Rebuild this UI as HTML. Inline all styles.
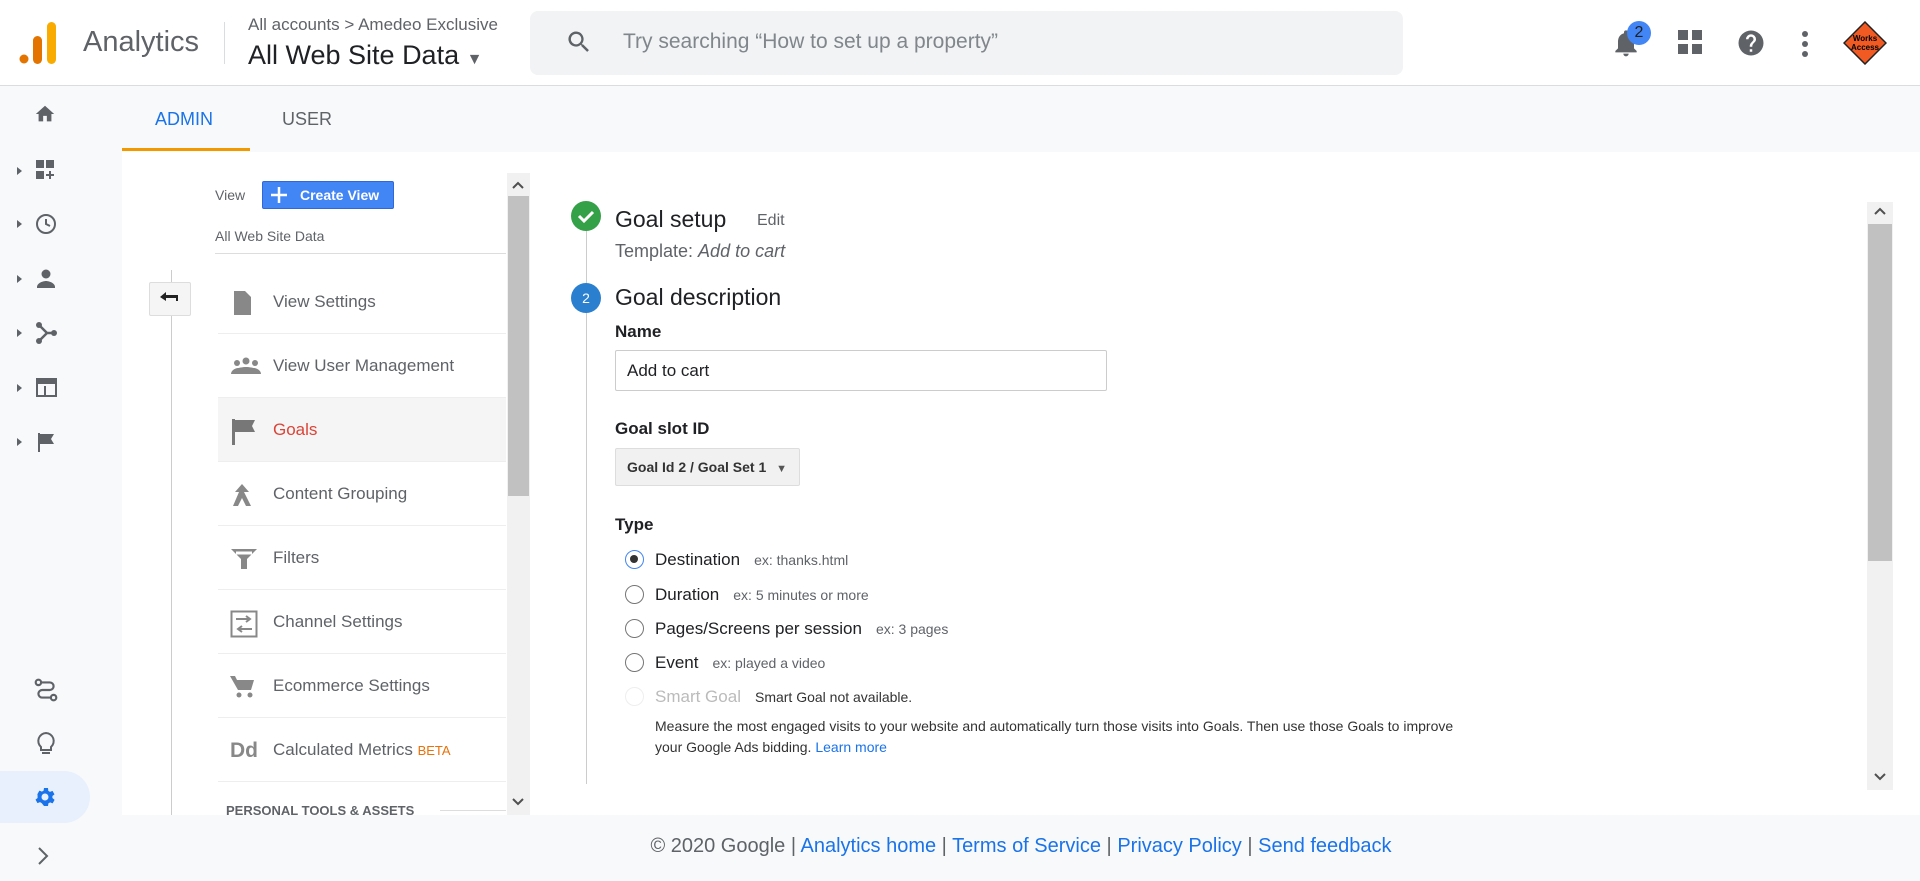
<!DOCTYPE html>
<html><head><meta charset="utf-8"><style>
*{box-sizing:border-box;margin:0;padding:0}
body{width:1920px;height:881px;overflow:hidden;background:#f8f9fa;font-family:"Liberation Sans",Arial,sans-serif;color:#202124;position:relative}
.a{position:absolute}
.hdr{left:0;top:0;width:1920px;height:86px;background:#fff;border-bottom:1px solid #dadce0}
.nav svg{position:absolute}
.ico{fill:#5f6368}
.row{position:absolute;left:218px;width:288px;height:64px;border-bottom:1px solid #eee;font-size:17px;color:#5f6368}
.row span{position:absolute;left:55px;top:22px}
.row svg{position:absolute;left:12px;top:20px}
.radio{position:absolute;left:625px;width:19px;height:19px;border:1.5px solid #757575;border-radius:50%;background:#fff}
.rl{position:absolute;left:655px;font-size:17px;color:#202124}
.rl small{font-size:14px;color:#5f6368;margin-left:14px}
</style></head><body>
<div class="a hdr">
 <svg class="a" style="left:19px;top:22px" width="38" height="42"><rect x="28" y="0" width="9" height="42" rx="4.5" fill="#f9ab00"/><rect x="14" y="14" width="9" height="28" rx="4.5" fill="#e37400"/><circle cx="5" cy="37" r="4.5" fill="#e37400"/></svg>
 <div class="a" style="left:83px;top:26px;font-size:29px;color:#5f6368">Analytics</div>
 <div class="a" style="left:224px;top:22px;width:1px;height:42px;background:#dadce0"></div>
 <div class="a" style="left:248px;top:15px;font-size:17px;color:#5f6368">All accounts &gt; Amedeo Exclusive</div>
 <div class="a" style="left:248px;top:40px;font-size:27px;color:#202124">All Web Site Data <span style="font-size:16px;color:#5f6368">▼</span></div>
 <div class="a" style="left:530px;top:11px;width:873px;height:64px;background:#f1f3f4;border-radius:8px"></div>
 <svg class="a" style="left:565px;top:28px" width="28" height="28" viewBox="0 0 24 24"><path class="ico" d="M15.5 14h-.8l-.3-.3A6.5 6.5 0 1 0 9.5 16a6.5 6.5 0 0 0 4.2-1.6l.3.3v.8l5 5 1.5-1.5-5-5zm-6 0a4.5 4.5 0 1 1 0-9 4.5 4.5 0 0 1 0 9z"/></svg>
 <div class="a" style="left:623px;top:30px;font-size:21px;color:#80868b">Try searching “How to set up a property”</div>
 <svg class="a" style="left:1610px;top:27px" width="32" height="32" viewBox="0 0 24 24"><path class="ico" d="M12 22c1.1 0 2-.9 2-2h-4c0 1.1.9 2 2 2zm6-6v-5c0-3.1-1.6-5.6-4.5-6.3V4a1.5 1.5 0 0 0-3 0v.7C7.6 5.4 6 7.9 6 11v5l-2 2v1h16v-1l-2-2z"/></svg>
 <div class="a" style="left:1627px;top:21px;width:24px;height:24px;border-radius:50%;background:#4285f4;color:#202124;font-size:16px;text-align:center;line-height:24px">2</div>
 <svg class="a" style="left:1678px;top:30px" width="26" height="26"><rect x="0" y="0" width="10" height="10" class="ico"/><rect x="14" y="0" width="10" height="10" class="ico"/><rect x="0" y="14" width="10" height="10" class="ico"/><rect x="14" y="14" width="10" height="10" class="ico"/></svg>
 <svg class="a" style="left:1736px;top:28px" width="30" height="30" viewBox="0 0 24 24"><path class="ico" d="M12 2a10 10 0 1 0 0 20 10 10 0 0 0 0-20zm1 17h-2v-2h2v2zm2.1-7.8-.9.9C13.5 12.9 13 13.5 13 15h-2v-.5c0-1.1.4-2.1 1.2-2.8l1.2-1.3A2 2 0 0 0 12 7a2 2 0 0 0-2 2H8a4 4 0 0 1 8 0c0 .9-.4 1.7-.9 2.2z"/></svg>
 <svg class="a" style="left:1800px;top:30px" width="10" height="28"><circle cx="5" cy="4" r="3" class="ico"/><circle cx="5" cy="14" r="3" class="ico"/><circle cx="5" cy="24" r="3" class="ico"/></svg>
 <svg class="a" style="left:1843px;top:21px" width="44" height="44"><polygon points="22,1 43,22 22,43 1,22" fill="#f15a22" stroke="#222" stroke-width="1.5"/><text x="22" y="20" font-size="8" text-anchor="middle" font-family="Liberation Sans" font-weight="bold">Works</text><text x="22" y="29" font-size="8" text-anchor="middle" font-family="Liberation Sans" font-weight="bold">Access</text></svg>
</div>
<!-- left nav -->
<div class="nav">
 <svg style="left:34px;top:103px" width="22" height="22" viewBox="0 0 24 24"><path class="ico" d="M10 20v-6h4v6h5v-8h3L12 3 2 12h3v8z"/></svg>
 <svg style="left:14px;top:160px" width="40" height="22"><path d="M3 7l5 4-5 4z" class="ico"/><rect x="22" y="0" width="8" height="8" class="ico"/><rect x="32" y="0" width="8" height="8" class="ico"/><rect x="22" y="11" width="8" height="8" class="ico"/><path d="M32 15h8M36 11v8" stroke="#5f6368" stroke-width="2"/></svg>
 <svg style="left:14px;top:212px" width="44" height="24"><path d="M3 8l5 4-5 4z" class="ico"/><circle cx="32" cy="12" r="9" fill="none" stroke="#5f6368" stroke-width="2"/><path d="M32 7v5l4 2" fill="none" stroke="#5f6368" stroke-width="2"/></svg>
 <svg style="left:14px;top:267px" width="44" height="24"><path d="M3 8l5 4-5 4z" class="ico"/><circle cx="32" cy="7" r="4.5" class="ico"/><path d="M23 20c0-4 6-6 9-6s9 2 9 6v1H23z" class="ico"/></svg>
 <svg style="left:14px;top:321px" width="44" height="24"><path d="M3 8l5 4-5 4z" class="ico"/><path d="M25 4l8 8-8 8M33 12h8" fill="none" stroke="#5f6368" stroke-width="2.5"/><circle cx="25" cy="4" r="3" class="ico"/><circle cx="25" cy="20" r="3" class="ico"/><circle cx="40" cy="12" r="3" class="ico"/></svg>
 <svg style="left:14px;top:376px" width="44" height="24"><path d="M3 8l5 4-5 4z" class="ico"/><rect x="23" y="3" width="19" height="17" fill="none" stroke="#5f6368" stroke-width="2"/><rect x="23" y="3" width="19" height="5" class="ico"/><rect x="30" y="10" width="2" height="9" class="ico"/></svg>
 <svg style="left:14px;top:430px" width="44" height="24"><path d="M3 8l5 4-5 4z" class="ico"/><path d="M24 3h2v19h-2zM26 4h14l-3 5 3 5H26z" class="ico"/></svg>
 <svg style="left:33px;top:677px" width="26" height="26" viewBox="0 0 24 24"><circle cx="5" cy="5" r="2.5" fill="none" stroke="#5f6368" stroke-width="2"/><circle cx="19" cy="19" r="2.5" fill="none" stroke="#5f6368" stroke-width="2"/><path d="M7.5 5h8a3.5 3.5 0 0 1 0 7h-7a3.5 3.5 0 0 0 0 7h8" fill="none" stroke="#5f6368" stroke-width="2"/></svg>
 <svg style="left:35px;top:731px" width="22" height="26" viewBox="0 0 22 26"><path d="M11 2a8 8 0 0 0-5 14v3h10v-3A8 8 0 0 0 11 2z" fill="none" stroke="#5f6368" stroke-width="2"/><rect x="7" y="21" width="8" height="2" class="ico"/></svg>
 <div class="a" style="left:0;top:771px;width:90px;height:52px;background:#e8f0fe;border-radius:0 26px 26px 0"></div>
 <svg style="left:33px;top:785px" width="24" height="24" viewBox="0 0 24 24"><path fill="#1a73e8" d="M19.4 13a7.5 7.5 0 0 0 0-2l2.1-1.6-2-3.5-2.5 1a7 7 0 0 0-1.7-1L15 3h-4l-.4 2.6a7 7 0 0 0-1.7 1l-2.5-1-2 3.5L4.6 11a7.5 7.5 0 0 0 0 2l-2.1 1.6 2 3.5 2.5-1a7 7 0 0 0 1.7 1L11 21h4l.4-2.6a7 7 0 0 0 1.7-1l2.5 1 2-3.5zM12 15.5a3.5 3.5 0 1 1 0-7 3.5 3.5 0 0 1 0 7z"/></svg>
 <svg style="left:36px;top:846px" width="14" height="20"><path d="M3 2l8 8-8 8" fill="none" stroke="#5f6368" stroke-width="2"/></svg>
</div>
<!-- tabs -->
<div class="a" style="left:155px;top:109px;font-size:18px;color:#1a73e8">ADMIN</div>
<div class="a" style="left:282px;top:109px;font-size:18px;color:#5f6368">USER</div>
<div class="a" style="left:122px;top:148px;width:128px;height:3px;background:#f29900"></div>
<!-- main white area -->
<div class="a" style="left:122px;top:152px;width:1798px;height:663px;background:#fff"></div>
<div class="a" style="left:215px;top:187px;font-size:14px;color:#5f6368">View</div>
<div class="a" style="left:262px;top:181px;width:132px;height:28px;background:#4285f4;border:1px solid #3367d6;border-radius:2px;color:#fff;font-size:14px;font-weight:bold;line-height:26px;padding-left:37px">Create View</div>
<svg class="a" style="left:270px;top:186px" width="18" height="18"><path d="M9 1v16M1 9h16" stroke="#fff" stroke-width="2.5"/></svg>
<div class="a" style="left:215px;top:228px;font-size:14px;color:#5f6368">All Web Site Data</div>
<div class="a" style="left:215px;top:253px;width:291px;height:1px;background:#ddd"></div>
<div class="a" style="left:171px;top:270px;width:1px;height:545px;background:#ccc"></div>
<div class="a" style="left:149px;top:282px;width:42px;height:34px;background:#f5f5f5;border:1px solid #ddd;border-radius:2px"></div>
<svg class="a" style="left:158px;top:290px" width="22" height="16"><path d="M2 7l6-5v3h12v6h-2V8H8v3z" fill="#222"/></svg>
<div class="row" style="top:270px"><svg width="24" height="26"><path d="M4 1h11l6 6v18H4z" class="ico" style="fill:#888"/></svg><span>View Settings</span></div>
<div class="row" style="top:334px"><svg width="32" height="24"><circle cx="7" cy="9" r="3" fill="#888"/><circle cx="16" cy="7" r="3.5" fill="#888"/><circle cx="25" cy="9" r="3" fill="#888"/><path d="M1 20c0-4 5-6 7-6 1 0 4-1 8-1s7 1 8 1c2 0 7 2 7 6z" fill="#888"/></svg><span>View User Management</span></div>
<div class="row" style="top:398px;background:#f5f5f5"><svg width="28" height="28"><path d="M2 1h3v26H2zM5 2h20l-3 6 3 6H5z" fill="#777"/></svg><span style="color:#db4437">Goals</span></div>
<div class="row" style="top:462px"><svg width="26" height="28"><path d="M12 2l7 8h-5l7 14h-5l-4-8-4 8H3l6-14H5z" fill="#888"/></svg><span>Content Grouping</span></div>
<div class="row" style="top:526px"><svg width="28" height="26"><path d="M1 3h26l-10 10v10h-6V13z" fill="#888"/><path d="M6 7h16" stroke="#fff" stroke-width="3"/></svg><span>Filters</span></div>
<div class="row" style="top:590px"><svg width="28" height="28"><rect x="1.5" y="1.5" width="25" height="25" fill="none" stroke="#888" stroke-width="2"/><path d="M6 9h14M16 6l4 3-4 3M22 19H8M12 16l-4 3 4 3" fill="none" stroke="#888" stroke-width="2"/></svg><span>Channel Settings</span></div>
<div class="row" style="top:654px"><svg width="26" height="26"><path d="M0 2h5l2 4h17l-3 10H8z" fill="#888"/><circle cx="9" cy="21" r="2.5" fill="#888"/><circle cx="20" cy="21" r="2.5" fill="#888"/></svg><span>Ecommerce Settings</span></div>
<div class="row" style="top:718px"><svg width="30" height="26" style="top:19px"><text x="0" y="20" font-size="21" font-weight="bold" fill="#888" font-family="Liberation Sans">Dd</text></svg><span>Calculated Metrics <small style="font-size:13px;color:#e8710a">BETA</small></span></div>
<div class="a" style="left:226px;top:803px;font-size:13px;font-weight:bold;color:#5f6368">PERSONAL TOOLS &amp; ASSETS</div>
<div class="a" style="left:440px;top:810px;width:66px;height:1px;background:#ddd"></div>
<!-- left scrollbar -->
<div class="a" style="left:507px;top:173px;width:23px;height:642px;background:#f1f1f1"></div>
<div class="a" style="left:508px;top:196px;width:21px;height:300px;background:#c1c1c1"></div>
<svg class="a" style="left:511px;top:180px" width="14" height="10"><path d="M2 8l5-5 5 5" fill="none" stroke="#505050" stroke-width="2"/></svg>
<svg class="a" style="left:511px;top:797px" width="14" height="10"><path d="M2 2l5 5 5-5" fill="none" stroke="#505050" stroke-width="2"/></svg>
<!-- right content -->
<div class="a" style="left:586px;top:230px;width:1px;height:554px;background:#ccc"></div>
<svg class="a" style="left:571px;top:201px" width="30" height="30"><circle cx="15" cy="15" r="15" fill="#34a047"/><path d="M8 15l5 5 9-9" fill="none" stroke="#fff" stroke-width="3"/></svg>
<div class="a" style="left:615px;top:206px;font-size:23px">Goal setup</div>
<div class="a" style="left:757px;top:212px;font-size:16px;color:#5f6368">Edit</div>
<div class="a" style="left:615px;top:241px;font-size:18px;color:#5f6368">Template: <i>Add to cart</i></div>
<svg class="a" style="left:571px;top:283px" width="30" height="30"><circle cx="15" cy="15" r="15" fill="#2a7fcf"/><text x="15" y="20" font-size="14" fill="#fff" text-anchor="middle" font-family="Liberation Sans">2</text></svg>
<div class="a" style="left:615px;top:284px;font-size:23px">Goal description</div>
<div class="a" style="left:615px;top:322px;font-size:17px;font-weight:bold">Name</div>
<div class="a" style="left:615px;top:350px;width:492px;height:41px;border:1px solid #ccc;border-radius:2px;font-size:17px;line-height:39px;padding-left:11px">Add to cart</div>
<div class="a" style="left:615px;top:419px;font-size:17px;font-weight:bold">Goal slot ID</div>
<div class="a" style="left:615px;top:448px;width:185px;height:38px;border:1px solid #ddd;background:#f1f1f1;border-radius:2px;font-size:14px;font-weight:bold;line-height:36px;padding-left:11px;color:#333">Goal Id 2 / Goal Set 1 <span style="font-size:11px;color:#555;margin-left:6px">▼</span></div>
<div class="a" style="left:615px;top:515px;font-size:17px;font-weight:bold">Type</div>
<div class="radio" style="top:550px;border-color:#4285f4"><div style="position:absolute;left:4px;top:4px;width:8px;height:8px;border-radius:50%;background:#333"></div></div>
<div class="rl" style="top:550px">Destination<small>ex: thanks.html</small></div>
<div class="radio" style="top:585px"></div><div class="rl" style="top:585px">Duration<small>ex: 5 minutes or more</small></div>
<div class="radio" style="top:619px"></div><div class="rl" style="top:619px">Pages/Screens per session<small>ex: 3 pages</small></div>
<div class="radio" style="top:653px"></div><div class="rl" style="top:653px">Event<small>ex: played a video</small></div>
<div class="radio" style="top:687px;border-color:#eee"></div><div class="rl" style="top:687px;color:#bbb">Smart Goal<small style="color:#333">Smart Goal not available.</small></div>
<div class="a" style="left:655px;top:716px;font-size:14px;color:#333;line-height:21px;width:800px">Measure the most engaged visits to your website and automatically turn those visits into Goals. Then use those Goals to improve your Google Ads bidding. <span style="color:#1a73e8">Learn more</span></div>
<!-- right scrollbar -->
<div class="a" style="left:1867px;top:202px;width:26px;height:588px;background:#f1f1f1"></div>
<div class="a" style="left:1868px;top:224px;width:24px;height:337px;background:#c1c1c1"></div>
<svg class="a" style="left:1873px;top:206px" width="14" height="10"><path d="M2 8l5-5 5 5" fill="none" stroke="#505050" stroke-width="2"/></svg>
<svg class="a" style="left:1873px;top:772px" width="14" height="10"><path d="M2 2l5 5 5-5" fill="none" stroke="#505050" stroke-width="2"/></svg>
<!-- footer -->
<div class="a" style="left:0;top:835px;width:1920px;text-align:center;font-size:20px;color:#5f6368;padding-left:122px">© 2020 Google | <span style="color:#1a73e8">Analytics home</span> | <span style="color:#1a73e8">Terms of Service</span> | <span style="color:#1a73e8">Privacy Policy</span> | <span style="color:#1a73e8">Send feedback</span></div>
</body></html>
